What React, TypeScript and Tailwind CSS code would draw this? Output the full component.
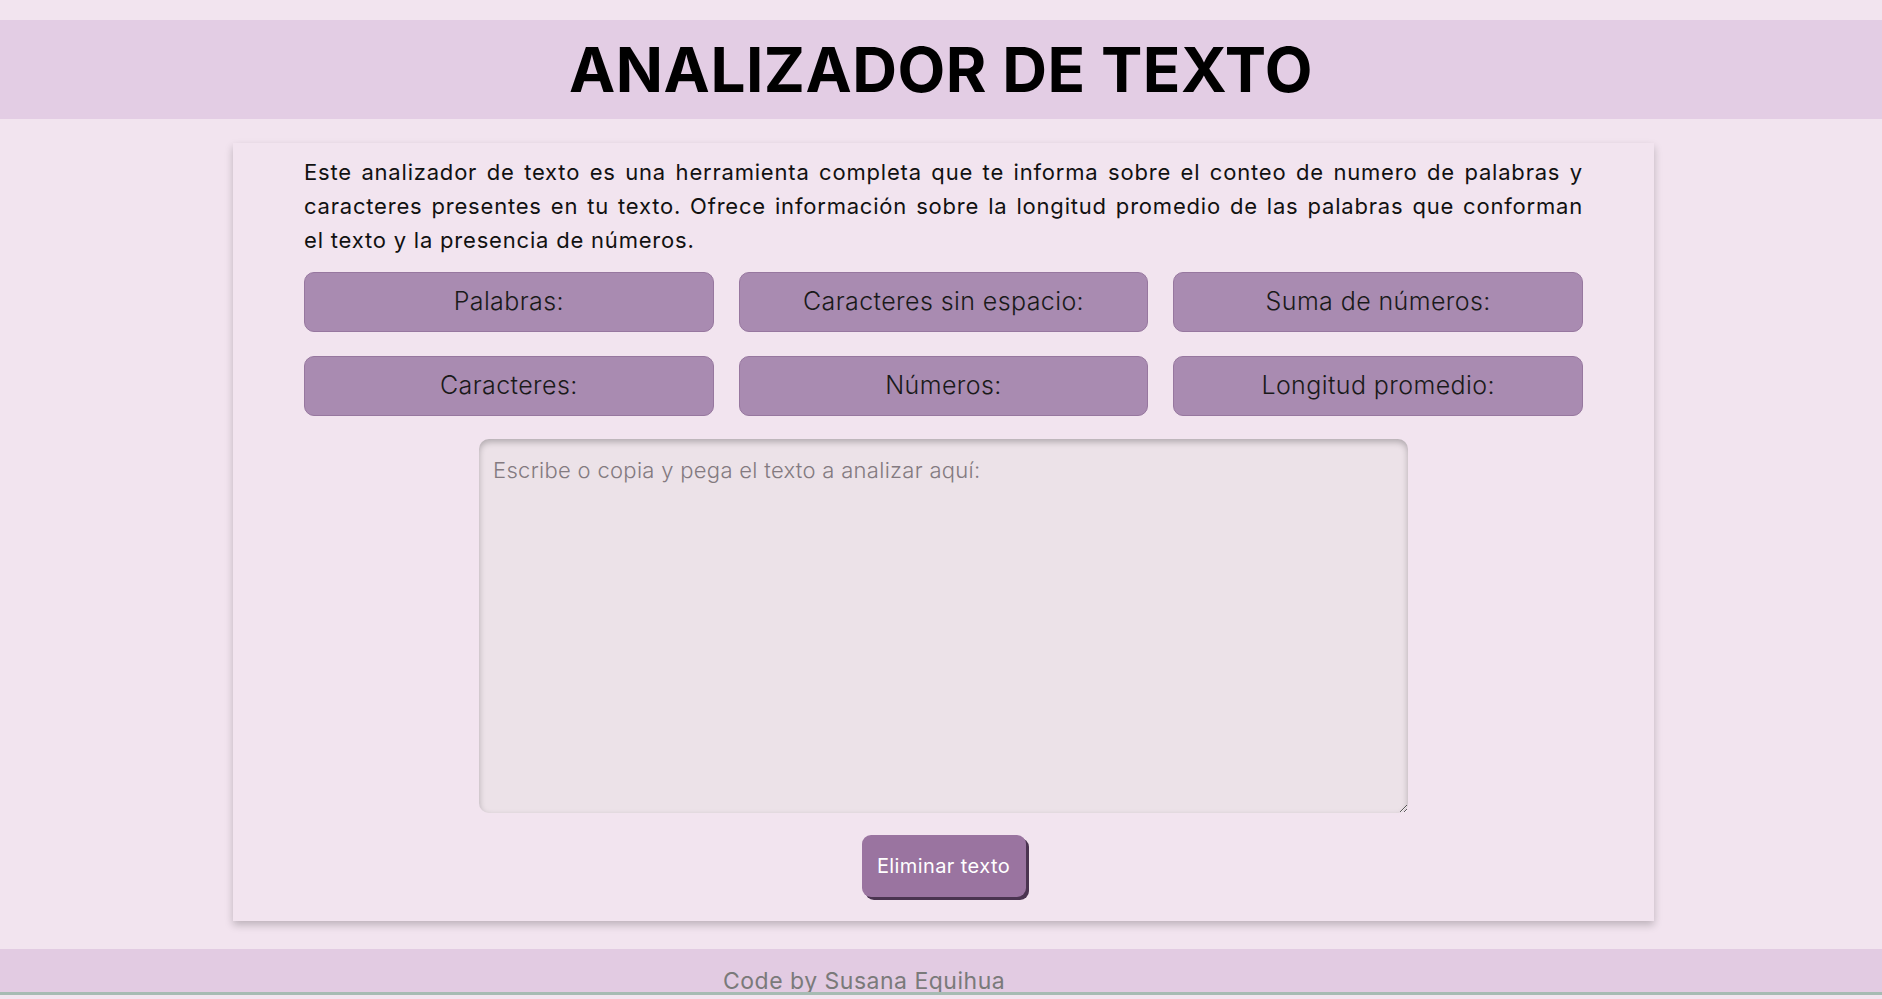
import { useState } from "react";

const STATS = [
  "Palabras:",
  "Caracteres sin espacio:",
  "Suma de números:",
  "Caracteres:",
  "Números:",
  "Longitud promedio:",
];

export default function App() {
  const [text, setText] = useState("");

  return (
    <div className="min-h-screen bg-[#f2e4ef] pt-5 font-['Inter','Liberation_Sans',sans-serif] text-[#111]">
      {/* Header */}
      <header className="h-[99px] bg-[#e3cde4] flex items-center justify-center">
        <h1 className="text-[62px] font-bold tracking-[0.5px] leading-none text-black">ANALIZADOR DE TEXTO</h1>
      </header>

      {/* Card */}
      <main className="pt-6 pl-[5px]">
        <section className="mx-auto w-[1421px] bg-[#f2e4ef] px-[71px] pt-[12px] pb-6 shadow-[0_4px_8px_rgba(0,0,0,0.22)]">
          <p className="text-[22px] leading-[34px] tracking-[0.8px] text-justify">
            <span className="block [text-align-last:justify]">
              Este analizador de texto es una herramienta completa que te informa sobre el conteo de numero de palabras y
            </span>
            <span className="block [text-align-last:justify]">
              caracteres presentes en tu texto. Ofrece información sobre la longitud promedio de las palabras que conforman
            </span>
            <span className="block">el texto y la presencia de números.</span>
          </p>

          <div className="mt-[15px] grid grid-cols-3 gap-x-[25px] gap-y-6">
            {STATS.map((s) => (
              <div
                key={s}
                className="h-[60px] rounded-[10px] border border-[#97779f] bg-[#a98bb1] flex items-center justify-center text-[25px] tracking-[0.4px] font-light text-[#1a1a1a]"
              >
                {s}
              </div>
            ))}
          </div>

          <div className="mt-[23px] flex justify-center">
            <textarea
              value={text}
              onChange={(e) => setText(e.target.value)}
              placeholder="Escribe o copia y pega el texto a analizar aquí:"
              className="w-[929px] h-[374px] rounded-[10px] bg-[#ece2e8] px-[14px] pt-[15px] pb-3 text-[22px] tracking-[0.3px] font-light text-[#333] placeholder:text-[#837a80] outline-none shadow-[inset_0_3px_6px_rgba(0,0,0,0.25)]"
            />
          </div>

          <div className="mt-[22px] flex justify-center">
            <button
              onClick={() => setText("")}
              className="w-[164px] h-[62px] rounded-[9px] bg-[#9a74a0] text-white text-[20px] tracking-[0.4px] shadow-[3px_3px_0_#4a3450]"
            >
              Eliminar texto
            </button>
          </div>
        </section>
      </main>

      {/* Footer */}
      <footer className="mt-7 h-[46px] bg-[#e2cbe2] border-b-[3px] border-[#a6bbb3] overflow-hidden">
        <p className="pl-[723px] pt-[18px] text-[23px] tracking-[0.5px] leading-[28px] text-[#7a7a7a]">Code by Susana Equihua</p>
      </footer>
    </div>
  );
}
